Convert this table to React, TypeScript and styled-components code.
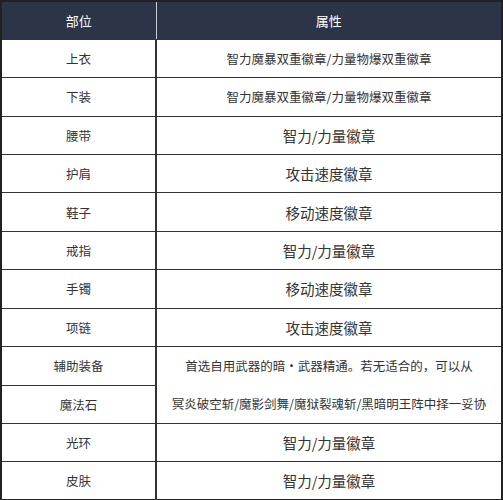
import { FC } from "react";
import styled, { createGlobalStyle } from "styled-components";

const GlobalStyle = createGlobalStyle`
  html, body {
    margin: 0;
    padding: 0;
    background: #ffffff;
  }
  body {
    font-family: "Noto Sans CJK SC", "Noto Sans", "Liberation Sans", sans-serif;
  }
`;

type Row = {
  slot: string;
  attr?: string;
  big?: boolean;
};

const rows: Row[] = [
  { slot: "上衣", attr: "智力魔暴双重徽章/力量物爆双重徽章" },
  { slot: "下装", attr: "智力魔暴双重徽章/力量物爆双重徽章" },
  { slot: "腰带", attr: "智力/力量徽章", big: true },
  { slot: "护肩", attr: "攻击速度徽章", big: true },
  { slot: "鞋子", attr: "移动速度徽章", big: true },
  { slot: "戒指", attr: "智力/力量徽章", big: true },
  { slot: "手镯", attr: "移动速度徽章", big: true },
  { slot: "项链", attr: "攻击速度徽章", big: true },
];

const tailRows: Row[] = [
  { slot: "光环", attr: "智力/力量徽章", big: true },
  { slot: "皮肤", attr: "智力/力量徽章", big: true },
];

const App: FC = () => {
  return (
    <>
      <GlobalStyle />
      <Table>
        <colgroup>
          <col style={{ width: 155 }} />
          <col />
        </colgroup>
        <thead>
          <tr>
            <HeadCell>部位</HeadCell>
            <HeadCell>属性</HeadCell>
          </tr>
        </thead>
        <tbody>
          {rows.map((r) => (
            <tr key={r.slot}>
              <SlotCell>{r.slot}</SlotCell>
              <AttrCell big={r.big}>{r.attr}</AttrCell>
            </tr>
          ))}
          <tr>
            <SlotCell>辅助装备</SlotCell>
            <AttrCell rowSpan={2}>
              <Line>首选自用武器的暗·武器精通。若无适合的，可以从</Line>
              <Line>冥炎破空斩/魔影剑舞/魔狱裂魂斩/黑暗明王阵中择一妥协</Line>
            </AttrCell>
          </tr>
          <tr>
            <SlotCell>魔法石</SlotCell>
          </tr>
          {tailRows.map((r) => (
            <tr key={r.slot}>
              <SlotCell>{r.slot}</SlotCell>
              <AttrCell big={r.big}>{r.attr}</AttrCell>
            </tr>
          ))}
        </tbody>
      </Table>
    </>
  );
};

export default App;

const Table = styled.table`
  width: 503px;
  height: 500px;
  border-collapse: collapse;
  table-layout: fixed;
  border: 2px solid #222;
  color: #333;

  tr {
    height: 38.4px;
  }
`;

const HeadCell = styled.th`
  background: #2c3447;
  color: #ffffff;
  font-size: 13px;
  font-weight: normal;
  text-align: center;
  border: 1px solid #2c3447;
  border-right: 1px solid #c8ccd4;
  padding: 0;

  &:last-child {
    border-right: 1px solid #2c3447;
  }
`;

const SlotCell = styled.td`
  border: 1px solid #333;
  border-right-width: 2px;
  text-align: center;
  font-size: 12.5px;
  padding: 0;
`;

const AttrCell = styled.td<{ big?: boolean }>`
  border: 1px solid #333;
  text-align: center;
  font-size: ${(p) => (p.big ? "14.5px" : "12.5px")};
  padding: 0;
  white-space: nowrap;
`;

const Line = styled.div`
  line-height: 38px;
`;
